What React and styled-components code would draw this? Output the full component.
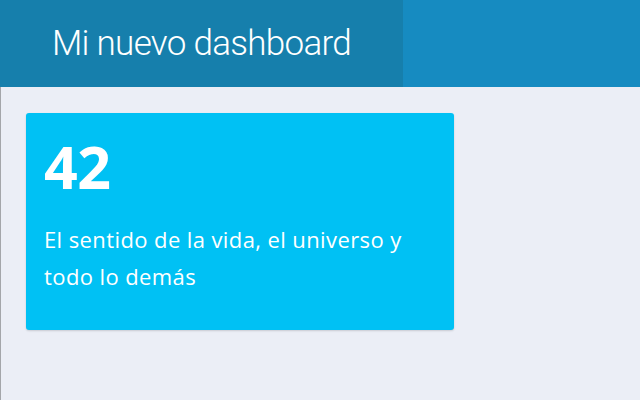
import React from "react";
import styled, { createGlobalStyle } from "styled-components";

const Global = createGlobalStyle`
  html, body { margin: 0; padding: 0; height: 100%; }
  body { background: #ebeef6; }
  #root { min-height: 100vh; }
`;

const Page = styled.div`
  min-height: 400px;
  display: flex;
  flex-direction: column;
  background: #ebeef6;
`;

const Header = styled.header`
  height: 87px;
  display: flex;
  background: #168bc1;
`;

const Brand = styled.div`
  width: 403px;
  background: #167fac;
  padding: 23px 0 0 52px;
  box-sizing: border-box;
`;

const Title = styled.h1`
  margin: 0;
  font-family: Roboto, "Liberation Sans", sans-serif;
  font-weight: 300;
  font-size: 35px;
  line-height: 41px;
  letter-spacing: -0.7px;
  white-space: nowrap;
  color: #ffffff;
`;

const Main = styled.main`
  flex: 1;
  border-left: 1px solid #a4a6aa;
  padding: 26px 0 0 25px;
`;

const Card = styled.section`
  width: 428px;
  height: 217px;
  box-sizing: border-box;
  background: #00c1f4;
  border-radius: 3px;
  box-shadow: 0 1px 2px rgba(0, 0, 0, 0.15);
  padding: 23px 18px 0 18px;
  color: #ffffff;
  font-family: "Open Sans", "Noto Sans", sans-serif;
`;

const Value = styled.div`
  font-size: 59px;
  font-weight: 700;
  line-height: 60px;
  letter-spacing: -0.5px;
`;

const Label = styled.p`
  margin: 25px 0 0;
  font-size: 22px;
  line-height: 37px;
  font-weight: 500;
  letter-spacing: 0.4px;
`;

export default function App() {
  return (
    <>
      <Global />
      <Page>
        <Header>
          <Brand>
            <Title>Mi nuevo dashboard</Title>
          </Brand>
        </Header>
        <Main>
          <Card>
            <Value>42</Value>
            <Label>El sentido de la vida, el universo y todo lo demás</Label>
          </Card>
        </Main>
      </Page>
    </>
  );
}
